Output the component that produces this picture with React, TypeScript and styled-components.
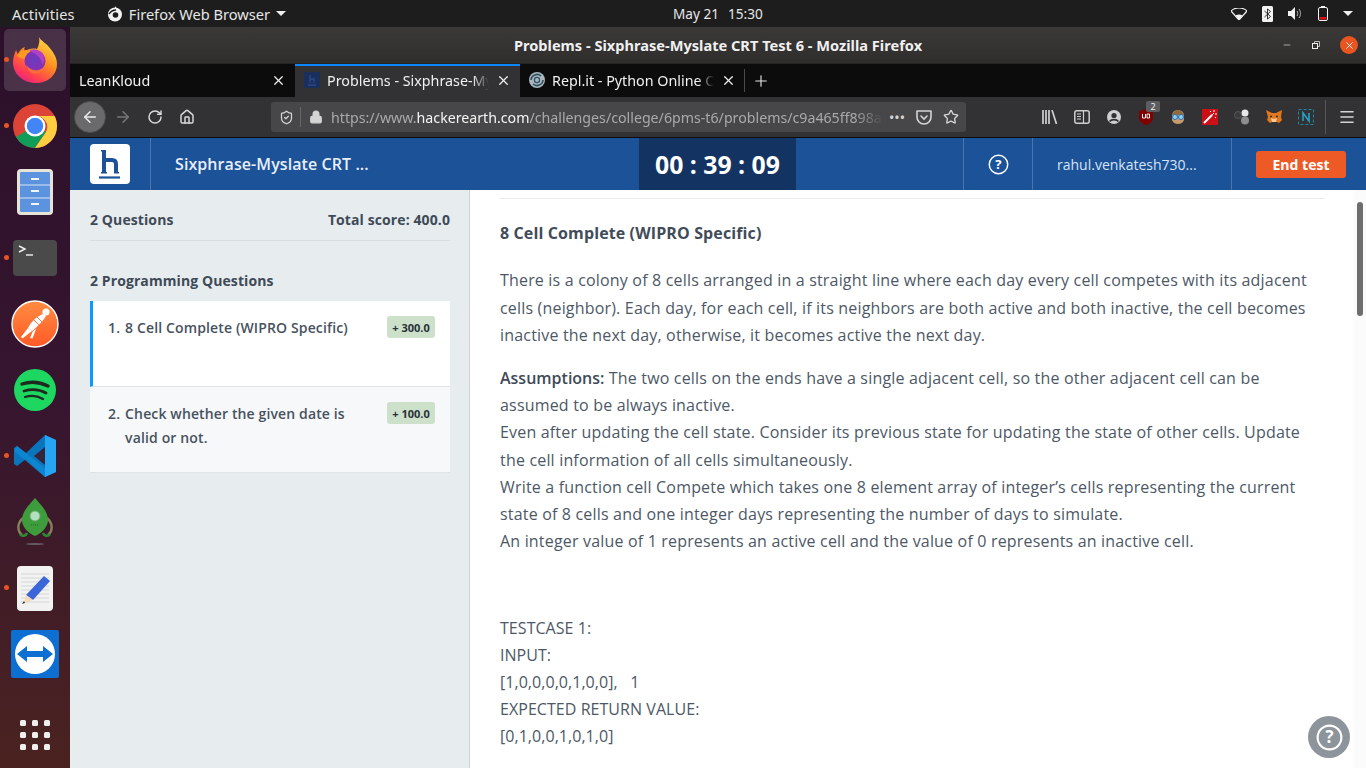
import React from 'react'
import styled, { createGlobalStyle } from 'styled-components'
import { X, Plus, ArrowLeft, ArrowRight, RotateCw, Home, Lock, ShieldCheck, Star, Menu, Minus } from 'lucide-react'

const UI_FONT = `"Noto Sans", "Open Sans", sans-serif`
const WEB_FONT = `"Open Sans", "Noto Sans", sans-serif`

const GlobalStyle = createGlobalStyle`
  html, body { margin: 0; padding: 0; width: 1366px; height: 768px; overflow: hidden; background: #fff; }
  * { box-sizing: border-box; }
`

const Screen = styled.div`
  width: 1366px;
  height: 768px;
  display: flex;
  flex-direction: column;
  overflow: hidden;
  font-family: ${UI_FONT};
`

/* gnome top bar */
const TopBar = styled.div`
  height: 27px;
  flex: none;
  background: #1d1d1d;
  color: #e6e6e6;
  display: grid;
  grid-template-columns: 661px auto 1fr;
  align-items: center;
  font-size: 14.6px;
  padding: 0 12px;
`
const TopLeft = styled.div`
  display: flex;
  align-items: center;
`
const Activities = styled.span`
  letter-spacing: 0.2px;
`
const AppMenu = styled.div`
  display: flex;
  align-items: center;
  gap: 6px;
  margin-left: 32px;
`
const Clock = styled.div`
  display: flex;
  gap: 9px;
  font-size: 13.6px;
`
const Tray = styled.div`
  display: flex;
  align-items: center;
  justify-content: flex-end;
  gap: 15px;
  padding-right: 1px;
`
const Caret = styled.span`
  width: 0;
  height: 0;
  border-left: 5px solid transparent;
  border-right: 5px solid transparent;
  border-top: 5px solid #eee;
  display: inline-block;
`

const Desktop = styled.div`
  flex: 1;
  display: flex;
  min-height: 0;
`

const Dock = styled.div`
  width: 70px;
  flex: none;
  background: linear-gradient(180deg, #2b1029 0%, #36152f 50%, #4a2320 100%);
  display: flex;
  flex-direction: column;
  align-items: center;
  padding-top: 2px;
`
const DockSlot = styled.div<{ $active?: boolean; $running?: boolean }>`
  position: relative;
  width: 62px;
  height: 62px;
  margin-bottom: 4px;
  border-radius: 5px;
  display: flex;
  align-items: center;
  justify-content: center;
  background: ${p => (p.$active ? 'rgba(255,255,255,0.14)' : 'transparent')};
  &::before {
    content: '';
    display: ${p => (p.$running ? 'block' : 'none')};
    position: absolute;
    left: 0;
    top: 28px;
    width: 5px;
    height: 5px;
    border-radius: 50%;
    background: #e95420;
  }
`
const DotsGrid = styled.div`
  display: grid;
  grid-template-columns: repeat(3, 6px);
  gap: 6px;
  margin-top: 31px;
  span {
    width: 6px;
    height: 6px;
    border-radius: 1.5px;
    background: #f1eeee;
  }
`

const Window = styled.div`
  flex: 1;
  min-width: 0;
  display: flex;
  flex-direction: column;
`
const TitleBar = styled.div`
  height: 37px;
  flex: none;
  background: linear-gradient(180deg, #3a3938, #2f2e2d);
  border-bottom: 1px solid #242424;
  position: relative;
  display: flex;
  align-items: center;
  justify-content: center;
  color: #f0f0f0;
  font-weight: 700;
  font-size: 14.6px;
`
const WinButtons = styled.div`
  position: absolute;
  right: 8px;
  top: 9px;
  display: flex;
  align-items: center;
  gap: 20px;
  color: #eee;
`
const CloseCircle = styled.div`
  width: 18px;
  height: 18px;
  border-radius: 50%;
  background: #e95420;
  display: flex;
  align-items: center;
  justify-content: center;
  color: #fff;
`

const TabStrip = styled.div`
  height: 33px;
  flex: none;
  background: #0c0c0d;
  display: flex;
  align-items: stretch;
`
const Tab = styled.div<{ $active?: boolean }>`
  width: 225px;
  display: flex;
  align-items: center;
  padding: 0 9px 3px;
  gap: 7px;
  color: #f0f0f0;
  font-size: 14.3px;
  background: ${p => (p.$active ? '#323234' : 'transparent')};
  border-top: 2px solid ${p => (p.$active ? '#0a84ff' : 'transparent')};
`
const TabTitle = styled.div`
  flex: 1;
  white-space: nowrap;
  overflow: hidden;
  -webkit-mask-image: linear-gradient(90deg, #000 90%, transparent);
  mask-image: linear-gradient(90deg, #000 90%, transparent);
`
const NewTab = styled.div`
  width: 32px;
  display: flex;
  align-items: center;
  justify-content: center;
  color: #e8e8e8;
  position: relative;
  &::before {
    content: '';
    position: absolute;
    left: -1px;
    top: 5px;
    bottom: 5px;
    width: 1px;
    background: #4a4a4f;
  }
`

const NavBar = styled.div`
  height: 41px;
  flex: none;
  background: #323234;
  border-bottom: 1px solid #0c0c0d;
  display: flex;
  align-items: center;
  padding-left: 4px;
  color: #d4d4d4;
`
const BackBtn = styled.div`
  width: 32px;
  height: 32px;
  border-radius: 50%;
  background: #6a6a6c;
  border: 1px solid #4e4e50;
  display: flex;
  align-items: center;
  justify-content: center;
  color: #eaeaea;
  margin-right: 1px;
`
const NavIcon = styled.div<{ $dim?: boolean }>`
  width: 32px;
  display: flex;
  align-items: center;
  justify-content: center;
  color: ${p => (p.$dim ? '#77777a' : '#d9d9d9')};
`
const UrlBar = styled.div`
  width: 695px;
  height: 30px;
  margin-left: 68px;
  background: #474749;
  border-radius: 3px;
  display: flex;
  align-items: center;
  padding-left: 8px;
  padding-right: 7px;
  color: #d4d4d4;
  font-size: 14.2px;
`
const UrlDivider = styled.div`
  width: 1px;
  height: 20px;
  background: #66666a;
  margin: 0 8px 0 6px;
`
const UrlText = styled.div`
  flex: 1;
  margin-left: 8px;
  color: #a9a9ab;
  white-space: nowrap;
  overflow: hidden;
  b {
    font-weight: 400;
    color: #f4f4f4;
  }
  -webkit-mask-image: linear-gradient(90deg, #000 95%, transparent);
  mask-image: linear-gradient(90deg, #000 95%, transparent);
`
const UrlActions = styled.div`
  display: flex;
  align-items: center;
  gap: 11px;
  margin-left: 6px;
`
const Extensions = styled.div`
  display: flex;
  align-items: center;
  margin-left: 68px;
`
const ExtSlot = styled.div`
  width: 32px;
  height: 24px;
  display: flex;
  align-items: center;
  justify-content: center;
  position: relative;
`
const UblockBadge = styled.span`
  position: absolute;
  left: 16px;
  top: -4px;
  width: 14px;
  height: 11px;
  background: #5d5d5f;
  border-radius: 2px;
  color: #eee;
  font-size: 9px;
  line-height: 11px;
  text-align: center;
`
const NavSeparator = styled.div`
  width: 1px;
  height: 34px;
  background: #55555a;
  margin-left: 3px;
  margin-right: 12px;
`

const Page = styled.div`
  flex: 1;
  min-height: 0;
  display: flex;
  flex-direction: column;
  font-family: ${WEB_FONT};
`
const AppHeader = styled.div`
  height: 52px;
  flex: none;
  background: #1c5298;
  display: flex;
  align-items: stretch;
  color: #fff;
`
const LogoCell = styled.div`
  width: 81px;
  border-right: 1px solid #4a76ae;
  display: flex;
  align-items: center;
  padding-left: 20px;
`
const Logo = styled.div`
  width: 40px;
  height: 40px;
  background: #fff;
  border-radius: 4px;
  display: flex;
`
const TestName = styled.div`
  width: 488px;
  padding-left: 24px;
  display: flex;
  align-items: center;
  font-size: 16px;
  font-weight: 600;
  letter-spacing: 0.08px;
  color: #e8eff8;
`
const Timer = styled.div`
  width: 157px;
  background: #133463;
  display: flex;
  align-items: center;
  justify-content: center;
  font-size: 24.8px;
  font-weight: 700;
`
const HeaderGap = styled.div`
  width: 168px;
  border-right: 1px solid #4a76ae;
`
const HelpCell = styled.div`
  width: 69px;
  border-right: 1px solid #4a76ae;
  display: flex;
  align-items: center;
  justify-content: center;
`
const UserCell = styled.div`
  width: 199px;
  border-right: 1px solid #4a76ae;
  padding-left: 24px;
  display: flex;
  align-items: center;
  font-size: 14px;
  color: #d6e3f3;
`
const EndCell = styled.div`
  flex: 1;
  display: flex;
  align-items: center;
  padding-left: 24px;
`
const EndButton = styled.button`
  width: 90px;
  height: 27px;
  border: 0;
  border-radius: 3px;
  background: #ee5a26;
  color: #fff;
  font-family: inherit;
  font-size: 14px;
  font-weight: 700;
  padding: 0;
`

const Body = styled.div`
  flex: 1;
  min-height: 0;
  display: flex;
  position: relative;
`
const Sidebar = styled.div`
  width: 400px;
  flex: none;
  background: #e7ecef;
  border-right: 1px solid #cfd4d8;
  padding: 0 19px 0 20px;
  color: #3f4a57;
`
const SideHead = styled.div`
  height: 51px;
  display: flex;
  align-items: center;
  justify-content: space-between;
  padding-top: 8px;
  border-bottom: 1px solid #d8dde1;
  font-size: 14px;
  font-weight: 700;
  letter-spacing: 0.1px;
`
const SideSection = styled.div`
  font-size: 14px;
  font-weight: 700;
  letter-spacing: 0.09px;
  line-height: 20px;
  margin-top: 30px;
  margin-bottom: 10px;
`
const QCard = styled.div<{ $active?: boolean }>`
  height: 86px;
  display: flex;
  align-items: flex-start;
  justify-content: space-between;
  padding: 15px 15px 0 ${p => (p.$active ? '15px' : '18px')};
  background: ${p => (p.$active ? '#fff' : '#f6f8fa')};
  border-left: ${p => (p.$active ? '3px solid #0a9bff' : '0')};
  border-bottom: 1px solid #dfe3e7;
`
const QLabel = styled.div`
  display: flex;
  gap: 5px;
  width: 250px;
  font-size: 14px;
  letter-spacing: 0.13px;
  line-height: 24px;
  font-weight: 600;
  color: #47525f;
`
const Badge = styled.span`
  width: 48px;
  height: 22px;
  border-radius: 3px;
  background: #cde0c9;
  color: #28323b;
  font-size: 11px;
  font-weight: 700;
  display: flex;
  align-items: center;
  justify-content: center;
`

const Content = styled.div`
  flex: 1;
  min-width: 0;
  padding: 8px 30px 0;
  color: #4d5866;
  font-size: 16px;
  line-height: 27.2px;
  overflow: hidden;
`
const Rule = styled.div`
  height: 1px;
  background: #e9e9e9;
`
const ProblemTitle = styled.h1`
  margin: 21px 0 20.3px;
  font-size: 16px;
  line-height: 27px;
  font-weight: 700;
  letter-spacing: 0.12px;
  color: #424c58;
`
const Para = styled.p`
  margin: 0 0 16px;
  letter-spacing: 0.18px;
  strong {
    font-weight: 600;
    letter-spacing: 0;
    color: #3f4a57;
  }
`
const TestCase = styled.div`
  margin-top: 59.3px;
  white-space: pre;
  letter-spacing: 0.05px;
`
const Track = styled.div`
  width: 12px;
  flex: none;
  background: #fbfbfb;
  padding: 12px 3px 0;
`
const Thumb = styled.div`
  width: 6px;
  height: 114px;
  border-radius: 3px;
  background: #6e6e6e;
`
const FloatHelp = styled.div`
  position: absolute;
  right: 16px;
  bottom: 10px;
  width: 42px;
  height: 42px;
  border-radius: 50%;
  background: #8d949c;
  display: flex;
  align-items: center;
  justify-content: center;
`

const FirefoxIcon = () => (
  <svg width="46" height="46" viewBox="0 0 46 46">
    <defs>
      <linearGradient id="ffa" x1="0.8" y1="0" x2="0.2" y2="1">
        <stop offset="0" stopColor="#ffe14a" />
        <stop offset="0.45" stopColor="#ff8a1f" />
        <stop offset="0.8" stopColor="#ff3a56" />
        <stop offset="1" stopColor="#e0208f" />
      </linearGradient>
      <radialGradient id="ffb" cx="0.5" cy="0.45" r="0.6">
        <stop offset="0" stopColor="#6a3bc0" />
        <stop offset="1" stopColor="#8a2fb0" />
      </radialGradient>
    </defs>
    <path d="M27 0c2 4 7 6 10 10 5 6 8 11 8 17 0 11-9 19-21 19C11 46 1 37 1 25c0-5 2-9 3-12 1 2 1 3 2 4 1-3 4-6 7-7-1 2-1 3 0 4 3-2 8-3 12-2 2-4 3-8 2-12z" fill="url(#ffa)" />
    <path d="M5 19c3-5 6-6 11-6 6-1 10 1 12 3-4-1-8 0-10 2-1 1-2 2-3 4-4 0-7-1-10-3z" fill="#ff9a1f" />
    <circle cx="23" cy="24" r="10.5" fill="url(#ffb)" />
    <path d="M17 14c5-3 13-1 15 5 1 3 0 7-2 9 0-6-4-11-13-14z" fill="#b240c4" />
    <path d="M14 27c2 5 9 8 15 5 2-1 3-2 4-4-1 7-8 10-13 8-3-1-5-5-6-9z" fill="#ff7139" opacity="0.9" />
  </svg>
)
const ChromeIcon = () => (
  <svg width="44" height="44" viewBox="0 0 44 44">
    <circle cx="22" cy="22" r="22" fill="#db4437" />
    <path d="M22 22 3 33a22 22 0 0 0 19 11l0 0L33 28z" fill="#0f9d58" />
    <path d="M22 12h19.6A22 22 0 0 1 22 44L33 28a11 11 0 0 0-11-16z" fill="#ffcd40" />
    <circle cx="22" cy="22" r="10.5" fill="#fff" />
    <circle cx="22" cy="22" r="8.2" fill="#4285f4" />
  </svg>
)
const FilesIcon = () => (
  <svg width="36" height="46" viewBox="0 0 36 46">
    <rect x="0" y="0" width="36" height="46" rx="4" fill="#e8e3d8" />
    <rect x="3" y="3" width="30" height="40" rx="1" fill="#5c93de" />
    <path d="M3 16h30M3 29h30" stroke="#d7e3f3" strokeWidth="1" />
    <path d="M14 10h8M14 22h8M14 35h8" stroke="#f2f5fa" strokeWidth="2" />
  </svg>
)
const TerminalIcon = () => (
  <svg width="44" height="36" viewBox="0 0 44 36">
    <rect width="44" height="36" rx="4" fill="#4a4a4a" />
    <path d="M6 6l6 3-6 3" stroke="#f2f2f2" strokeWidth="1.4" fill="none" />
    <path d="M13 15h7" stroke="#f2f2f2" strokeWidth="1.4" />
  </svg>
)
const PostmanIcon = () => (
  <svg width="48" height="48" viewBox="0 0 48 48">
    <defs>
      <linearGradient id="pm" x1="0" y1="0" x2="0" y2="1">
        <stop offset="0" stopColor="#ff8c42" />
        <stop offset="1" stopColor="#ff5a26" />
      </linearGradient>
    </defs>
    <circle cx="24" cy="24" r="23" fill="url(#pm)" stroke="#fff" strokeWidth="1.4" />
    <circle cx="35" cy="12" r="3.6" fill="#fff" />
    <path d="M32 14C26 16 20 22 17 28l4 3c5-4 11-10 14-15z" fill="#fff" />
    <path d="M17 28 10 37l1.5 1.5L21 31z" fill="#fff" />
    <path d="M22 31l-3 7 2.5 .5L25 29z" fill="#fff" />
    <path d="M23 20l5 5M26 17l5 5" stroke="#ff6c37" strokeWidth="0.9" />
  </svg>
)
const SpotifyIcon = () => (
  <svg width="42" height="42" viewBox="0 0 42 42">
    <circle cx="21" cy="21" r="21" fill="#1ed760" />
    <path d="M8 15c9-3 18-2 26 2" stroke="#1d2b1f" strokeWidth="3.4" fill="none" strokeLinecap="round" />
    <path d="M10 22c7-2 15-2 22 2" stroke="#1d2b1f" strokeWidth="2.8" fill="none" strokeLinecap="round" />
    <path d="M11 28c6-2 13-1 18 2" stroke="#1d2b1f" strokeWidth="2.3" fill="none" strokeLinecap="round" />
  </svg>
)
const VSCodeIcon = () => (
  <svg width="42" height="42" viewBox="0 0 42 42">
    <path d="M31 0 42 5v32l-11 5L12 24 3 31l-3-2v-16l3-2 9 7z" fill="#0a74bd" />
    <path d="M3 11l28 22v9L0 16z" fill="#0f8ad6" opacity="0.8" />
    <path d="M31 0l11 5v32l-11 5z" fill="#26a5f2" />
    <path d="M31 12 20 21l11 9z" fill="#35243a" />
  </svg>
)
const RocketIcon = () => (
  <svg width="36" height="48" viewBox="0 0 36 48">
    <ellipse cx="18" cy="46" rx="9" ry="1" fill="#6a5a60" />
    <path d="M6 20c-6 5-6 13-1 17M30 20c6 5 6 13 1 17" stroke="#87805d" strokeWidth="2.4" fill="none" />
    <path d="M18 0c5 6 13 13 13 22 0 7-6 13-13 16-7-3-13-9-13-16C5 13 13 6 18 0z" fill="#3e9c3c" />
    <circle cx="18" cy="18" r="5" fill="#b5e0c0" stroke="#6bb06f" />
    <path d="M14 27h8" stroke="#1f6b22" strokeDasharray="1 1" />
    <path d="M3 36c2 3 6 2 7-1M33 36c-2 3-6 2-7-1" stroke="#2f8a35" strokeWidth="2.5" fill="none" />
  </svg>
)
const EditorIcon = () => (
  <svg width="36" height="45" viewBox="0 0 36 45">
    <rect width="36" height="45" rx="4" fill="#f2f2f2" />
    <path d="M4 8h28M4 12h28M4 16h28M4 20h28M4 24h28M4 28h28M4 32h28M4 36h28" stroke="#cfcfcf" strokeWidth="0.8" />
    <path d="M27 10l6 5-17 19-7-5z" fill="#3a66d8" />
    <path d="M9 29l7 5-9 3z" fill="#f5d9b8" />
    <path d="M7 35l-2 3 3-1z" fill="#333" />
  </svg>
)
const TeamViewerIcon = () => (
  <svg width="48" height="48" viewBox="0 0 48 48">
    <rect width="48" height="48" rx="2" fill="#0c6fd1" />
    <circle cx="24" cy="24" r="20" fill="#fff" />
    <path d="M6 24l10-8v5h16v-5l10 8-10 8v-5H16v5z" fill="#0c6fd1" />
  </svg>
)
const BrowserMark = () => (
  <svg width="16" height="16" viewBox="0 0 16 16">
    <circle cx="8" cy="8.5" r="7" fill="#f2f2f2" />
    <circle cx="8.5" cy="9" r="2.8" fill="#1d1d1d" />
    <path d="M8 0c1 2 3 3 4 4L8 5z" fill="#f2f2f2" />
    <path d="M2 8c2-3 4-4 7-4" stroke="#1d1d1d" strokeWidth="1.4" fill="none" />
  </svg>
)
const WifiIcon = () => (
  <svg width="16" height="12" viewBox="0 0 16 12">
    <path d="M0 3c4-4 12-4 16 0l-8 9z" fill="none" stroke="#f2f2f2" strokeWidth="1.2" />
    <path d="M4.5 7.5c2-1.5 5-1.5 7 0L8 12z" fill="#f2f2f2" />
  </svg>
)
const BluetoothIcon = () => (
  <svg width="11" height="16" viewBox="0 0 11 16">
    <rect width="11" height="16" rx="1.5" fill="#f2f2f2" />
    <path d="M2.5 5l6 5.5L5.5 13V3l3 2.5-6 5.5" fill="none" stroke="#1d1d1d" strokeWidth="0.9" />
  </svg>
)
const SoundIcon = () => (
  <svg width="15" height="13" viewBox="0 0 15 13">
    <path d="M0 4h3l4-4v13L3 9H0z" fill="#f2f2f2" />
    <path d="M9 4c1 1.5 1 3.5 0 5M11 2c2 3 2 6 0 9" stroke="#bbb" strokeWidth="1" fill="none" />
  </svg>
)
const BatteryIcon = () => (
  <svg width="10" height="15" viewBox="0 0 10 15">
    <rect x="0.5" y="1.5" width="9" height="13" rx="1.5" fill="none" stroke="#f2f2f2" />
    <rect x="3" y="0" width="4" height="2" fill="#f2f2f2" />
    <rect x="1.5" y="11" width="7" height="2.5" fill="#d8121c" />
  </svg>
)
const RestoreIcon = () => (
  <svg width="8" height="8" viewBox="0 0 8 8">
    <rect x="0.5" y="2.5" width="5" height="5" fill="none" stroke="#eee" />
    <path d="M2.5 2V0.5h5v5H6" fill="none" stroke="#bbb" />
  </svg>
)
const SiteFavicon = () => (
  <svg width="16" height="16" viewBox="0 0 16 16">
    <rect width="16" height="16" rx="1" fill="#1a2f5c" />
    <path d="M6 3v8M6 7h4v4M4 13h8" stroke="#2c4a85" strokeWidth="1.4" fill="none" />
  </svg>
)
const ReplitFavicon = () => (
  <svg width="16" height="16" viewBox="0 0 16 16">
    <circle cx="8" cy="8" r="8" fill="#a8b6bd" />
    <path d="M2 8a6 6 0 0 1 10-4M14 8a6 6 0 0 1-10 4" stroke="#2f4f5f" strokeWidth="1.6" fill="none" />
    <circle cx="8" cy="8" r="2.6" fill="none" stroke="#2f4f5f" strokeWidth="1.2" />
  </svg>
)
const LibraryIcon = () => (
  <svg width="16" height="14" viewBox="0 0 16 14">
    <path d="M1 0v14M4 0v14M7 0v14M10 0l4.5 14" stroke="#cfcfcf" strokeWidth="1.7" fill="none" />
  </svg>
)
const SidebarIcon = () => (
  <svg width="16" height="14" viewBox="0 0 16 14">
    <rect x="0.8" y="0.8" width="14.4" height="12.4" rx="2" fill="none" stroke="#cfcfcf" strokeWidth="1.5" />
    <path d="M9.5 1v12M3 4h4M3 6.5h4M3 9h4" stroke="#cfcfcf" strokeWidth="1.2" />
  </svg>
)
const AccountIcon = () => (
  <svg width="14" height="14" viewBox="0 0 14 14">
    <circle cx="7" cy="7" r="7" fill="#cfcfcf" />
    <circle cx="7" cy="5.5" r="2.6" fill="#323234" />
    <path d="M2.5 11.5c2-2.5 7-2.5 9 0" stroke="#323234" strokeWidth="1.6" fill="none" />
  </svg>
)
const UblockIcon = () => (
  <svg width="14" height="16" viewBox="0 0 14 16">
    <path d="M7 0l7 2v7c0 3-3 6-7 7-4-1-7-4-7-7V2z" fill="#800000" />
    <path d="M3.5 5v4h3V5M8 5v4h2.5V5z" stroke="#eee" strokeWidth="1" fill="none" />
  </svg>
)
const NerdIcon = () => (
  <svg width="16" height="16" viewBox="0 0 16 16">
    <path d="M2 7c0-4 3-6 6-6s6 2 6 6v4c-1 3-4 4-6 4s-5-1-6-4z" fill="#c79a6b" />
    <path d="M2 6c1-3 4-5 6-5s5 2 6 5z" fill="#8f6a3c" />
    <circle cx="5" cy="8" r="2.5" fill="#8fd0f0" stroke="#2a6fb5" />
    <circle cx="11" cy="8" r="2.5" fill="#8fd0f0" stroke="#2a6fb5" />
  </svg>
)
const WandIcon = () => (
  <svg width="16" height="16" viewBox="0 0 16 16">
    <rect width="16" height="16" fill="#cc0f16" />
    <path d="M2 14 10 6" stroke="#fff" strokeWidth="2" />
    <path d="M10 6l2-2M12 1v2M15 5h-2M8 2l1 1M14 9l-1-1" stroke="#fff" strokeWidth="1" />
  </svg>
)
const BallsIcon = () => (
  <svg width="16" height="16" viewBox="0 0 16 16">
    <circle cx="11" cy="4" r="3.5" fill="#e8e8e8" />
    <circle cx="11" cy="11.5" r="4" fill="#8d8d8d" />
    <circle cx="4" cy="6" r="3.5" fill="#3a3a3a" stroke="#777" strokeWidth="0.5" />
  </svg>
)
const FoxIcon = () => (
  <svg width="16" height="16" viewBox="0 0 16 16">
    <path d="M0 1l6 3h4l6-3-1 7 1 3-3 3-2-1H6l-2 1-3-3 1-3z" fill="#e2761b" />
    <path d="M5 9l3 1 3-1-1 4H6z" fill="#f6c99b" />
    <circle cx="5" cy="7.5" r="1" fill="#233447" />
    <circle cx="11" cy="7.5" r="1" fill="#233447" />
  </svg>
)
const NimbusIcon = () => (
  <svg width="16" height="16" viewBox="0 0 16 16">
    <rect x="0.5" y="0.5" width="15" height="15" fill="none" stroke="#1d87a5" strokeDasharray="3 2" />
    <path d="M5 12V4l6 8V4" stroke="#27a0c4" strokeWidth="1.6" fill="none" />
  </svg>
)
const PocketIcon = () => (
  <svg width="16" height="15" viewBox="0 0 16 15">
    <path d="M1 1h14v6c0 4-3 7-7 7S1 11 1 7z" fill="none" stroke="#d4d4d4" strokeWidth="1.6" strokeLinejoin="round" />
    <path d="M5 6l3 3 3-3" fill="none" stroke="#d4d4d4" strokeWidth="1.6" strokeLinecap="round" />
  </svg>
)
const HeLogo = () => (
  <svg width="40" height="40" viewBox="0 0 40 40">
    <path d="M14 6v23" stroke="#1c5298" strokeWidth="4" fill="none" />
    <path d="M14 16h8c3 0 4 2 4 4v9" stroke="#1c5298" strokeWidth="4" fill="none" />
    <path d="M11 6.8h4M11 28.8h6M24 28.8h5" stroke="#1c5298" strokeWidth="1.4" />
    <path d="M9 33.5h21" stroke="#1c5298" strokeWidth="2.2" />
  </svg>
)
const HelpRing = ({ size, weight }: { size: number; weight: number }) => (
  <svg width={size} height={size} viewBox="0 0 20 20">
    <circle cx="10" cy="10" r="8.8" fill="none" stroke="#fff" strokeWidth={weight} />
    <text x="10" y="14.4" textAnchor="middle" fontSize="12.5" fontWeight="700" fill="#fff" fontFamily="Open Sans">?</text>
  </svg>
)

const dockItems: { icon: React.ReactNode; active?: boolean; running?: boolean }[] = [
  { icon: <FirefoxIcon />, active: true, running: true },
  { icon: <ChromeIcon />, running: true },
  { icon: <FilesIcon /> },
  { icon: <TerminalIcon />, running: true },
  { icon: <PostmanIcon /> },
  { icon: <SpotifyIcon /> },
  { icon: <VSCodeIcon />, running: true },
  { icon: <RocketIcon /> },
  { icon: <EditorIcon />, running: true },
  { icon: <TeamViewerIcon /> },
]

const App = () => {
  return (
    <Screen>
      <GlobalStyle />
      <TopBar>
        <TopLeft>
          <Activities>Activities</Activities>
          <AppMenu>
            <BrowserMark />
            Firefox Web Browser
            <Caret />
          </AppMenu>
        </TopLeft>
        <Clock>
          <span>May 21</span>
          <span>15:30</span>
        </Clock>
        <Tray>
          <WifiIcon />
          <BluetoothIcon />
          <SoundIcon />
          <BatteryIcon />
          <Caret />
        </Tray>
      </TopBar>
      <Desktop>
        <Dock>
          {dockItems.map((item, i) => (
            <DockSlot key={i} $active={item.active} $running={item.running}>
              {item.icon}
            </DockSlot>
          ))}
          <DotsGrid>
            {Array.from({ length: 9 }).map((_, i) => (
              <span key={i} />
            ))}
          </DotsGrid>
        </Dock>
        <Window>
          <TitleBar>
            Problems - Sixphrase-Myslate CRT Test 6 - Mozilla Firefox
            <WinButtons>
              <Minus size={10} strokeWidth={1.5} />
              <RestoreIcon />
              <CloseCircle>
                <X size={11} strokeWidth={2} />
              </CloseCircle>
            </WinButtons>
          </TitleBar>
          <TabStrip>
            <Tab>
              <TabTitle>LeanKloud</TabTitle>
              <X size={15} color="#eee" />
            </Tab>
            <Tab $active>
              <SiteFavicon />
              <TabTitle>Problems - Sixphrase-Myslate CRT Test 6</TabTitle>
              <X size={15} color="#eee" />
            </Tab>
            <Tab>
              <ReplitFavicon />
              <TabTitle>Repl.it - Python Online Compiler</TabTitle>
              <X size={15} color="#eee" />
            </Tab>
            <NewTab>
              <Plus size={18} strokeWidth={1.5} />
            </NewTab>
          </TabStrip>
          <NavBar>
            <BackBtn>
              <ArrowLeft size={18} />
            </BackBtn>
            <NavIcon $dim>
              <ArrowRight size={18} />
            </NavIcon>
            <NavIcon>
              <RotateCw size={16} strokeWidth={2.2} />
            </NavIcon>
            <NavIcon>
              <Home size={16} strokeWidth={2.2} />
            </NavIcon>
            <UrlBar>
              <ShieldCheck size={15} strokeWidth={2} />
              <UrlDivider />
              <Lock size={14} fill="#d4d4d4" />
              <UrlText>
                https://www.<b>hackerearth.com</b>/challenges/college/6pms-t6/problems/c9a465ff898ab
              </UrlText>
              <UrlActions>
                <span>•••</span>
                <PocketIcon />
                <Star size={16} strokeWidth={2} />
              </UrlActions>
            </UrlBar>
            <Extensions>
              <ExtSlot><LibraryIcon /></ExtSlot>
              <ExtSlot><SidebarIcon /></ExtSlot>
              <ExtSlot><AccountIcon /></ExtSlot>
              <ExtSlot>
                <UblockIcon />
                <UblockBadge>2</UblockBadge>
              </ExtSlot>
              <ExtSlot><NerdIcon /></ExtSlot>
              <ExtSlot><WandIcon /></ExtSlot>
              <ExtSlot><BallsIcon /></ExtSlot>
              <ExtSlot><FoxIcon /></ExtSlot>
              <ExtSlot><NimbusIcon /></ExtSlot>
            </Extensions>
            <NavSeparator />
            <Menu size={18} strokeWidth={2.2} />
          </NavBar>
          <Page>
            <AppHeader>
              <LogoCell>
                <Logo>
                  <HeLogo />
                </Logo>
              </LogoCell>
              <TestName>Sixphrase-Myslate CRT ...</TestName>
              <Timer>00 : 39 : 09</Timer>
              <HeaderGap />
              <HelpCell>
                <HelpRing size={21} weight={1.4} />
              </HelpCell>
              <UserCell>rahul.venkatesh730...</UserCell>
              <EndCell>
                <EndButton>End test</EndButton>
              </EndCell>
            </AppHeader>
            <Body>
              <Sidebar>
                <SideHead>
                  <span>2 Questions</span>
                  <span>Total score: 400.0</span>
                </SideHead>
                <SideSection>2 Programming Questions</SideSection>
                <QCard $active>
                  <QLabel>
                    <span>1.</span>
                    <span>8 Cell Complete (WIPRO Specific)</span>
                  </QLabel>
                  <Badge>+ 300.0</Badge>
                </QCard>
                <QCard>
                  <QLabel>
                    <span>2.</span>
                    <span>Check whether the given date is valid or not.</span>
                  </QLabel>
                  <Badge>+ 100.0</Badge>
                </QCard>
              </Sidebar>
              <Content>
                <Rule />
                <ProblemTitle>8 Cell Complete (WIPRO Specific)</ProblemTitle>
                <Para>
                  There is a colony of 8 cells arranged in a straight line where each day every cell competes with its adjacent cells (neighbor). Each day, for each cell, if its neighbors are both active and both inactive, the cell becomes inactive the next day, otherwise, it becomes active the next day.
                </Para>
                <Para>
                  <strong>Assumptions:</strong> The two cells on the ends have a single adjacent cell, so the other adjacent cell can be assumed to be always inactive.
                  <br />
                  Even after updating the cell state. Consider its previous state for updating the state of other cells. Update the cell information of all cells simultaneously.
                  <br />
                  Write a function cell Compete which takes one 8 element array of integer’s cells representing the current state of 8 cells and one integer days representing the number of days to simulate.
                  <br />
                  An integer value of 1 represents an active cell and the value of 0 represents an inactive cell.
                </Para>
                <TestCase>
                  TESTCASE 1:
                  <br />
                  INPUT:
                  <br />
                  {'[1,0,0,0,0,1,0,0],   1'}
                  <br />
                  EXPECTED RETURN VALUE:
                  <br />
                  [0,1,0,0,1,0,1,0]
                </TestCase>
              </Content>
              <Track>
                <Thumb />
              </Track>
              <FloatHelp>
                <HelpRing size={27} weight={1.6} />
              </FloatHelp>
            </Body>
          </Page>
        </Window>
      </Desktop>
    </Screen>
  )
}

export default App
